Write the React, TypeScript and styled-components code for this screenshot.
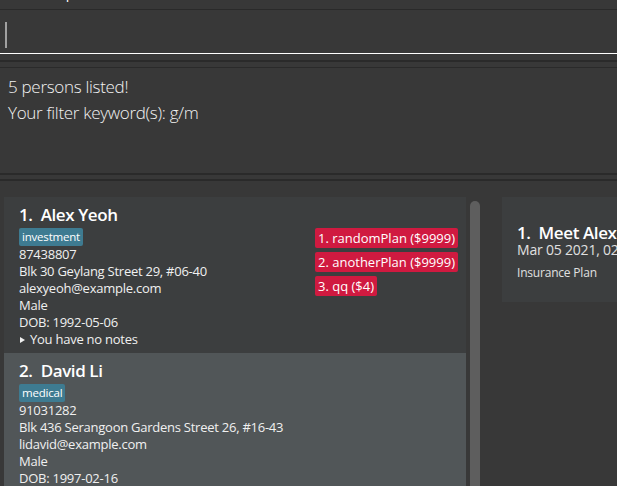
import styled, { createGlobalStyle } from "styled-components";

const GlobalStyle = createGlobalStyle`
  html, body {
    margin: 0;
    padding: 0;
    background: #383838;
    overflow: hidden;
  }
  body {
    font-family: "Open Sans", "Noto Sans", sans-serif;
    color: #ffffff;
  }
`;

type Person = {
  name: string;
  tag: string;
  phone: string;
  address: string;
  email: string;
  gender: string;
  dob: string;
  plans: string[];
  notes: string;
};

const persons: Person[] = [
  {
    name: "Alex Yeoh",
    tag: "investment",
    phone: "87438807",
    address: "Blk 30 Geylang Street 29, #06-40",
    email: "alexyeoh@example.com",
    gender: "Male",
    dob: "1992-05-06",
    plans: ["randomPlan ($9999)", "anotherPlan ($9999)", "qq ($4)"],
    notes: "You have no notes",
  },
  {
    name: "David Li",
    tag: "medical",
    phone: "91031282",
    address: "Blk 436 Serangoon Gardens Street 26, #16-43",
    email: "lidavid@example.com",
    gender: "Male",
    dob: "1997-02-16",
    plans: [],
    notes: "You have no notes",
  },
];

export default function App() {
  return (
    <>
      <GlobalStyle />
      <Root>
        <MenuBar>
          <MenuItem>File</MenuItem>
          <MenuItem>Help</MenuItem>
        </MenuBar>

        <CommandBox>
          <Caret />
        </CommandBox>

        <Divider $top={6} />
        <ResultDisplay>
          <ResultLine>5 persons listed!</ResultLine>
          <ResultLine>Your filter keyword(s): g/m</ResultLine>
        </ResultDisplay>
        <Divider $top={0} />
        <Divider $top={4} />

        <ListArea>
          <PersonList>
            {persons.map((p, i) => (
              <PersonCard key={p.name} $odd={i % 2 === 1}>
                <CardTitle>
                  {i + 1}.&nbsp;&nbsp;{p.name}
                </CardTitle>
                <CardBody>
                  <Details>
                    <Tags>
                      <Tag>{p.tag}</Tag>
                    </Tags>
                    <Field>{p.phone}</Field>
                    <Field>{p.address}</Field>
                    <Field>{p.email}</Field>
                    <Field>{p.gender}</Field>
                    <Field>DOB: {p.dob}</Field>
                    <Notes>
                      <Arrow />
                      {p.notes}
                    </Notes>
                  </Details>
                  <Plans>
                    {p.plans.map((plan, j) => (
                      <Plan key={plan}>
                        {j + 1}. {plan}
                      </Plan>
                    ))}
                  </Plans>
                </CardBody>
              </PersonCard>
            ))}
          </PersonList>
          <ScrollBar>
            <Thumb />
          </ScrollBar>

          <AppointmentList>
            <AppointmentCard>
              <AppTitle>1.&nbsp;&nbsp;Meet Alex Yeoh</AppTitle>
              <AppDate>Mar 05 2021, 02:00 PM</AppDate>
              <AppType>Insurance Plan</AppType>
            </AppointmentCard>
          </AppointmentList>
        </ListArea>
      </Root>
    </>
  );
}

const Root = styled.div`
  width: 617px;
  height: 486px;
  display: flex;
  flex-direction: column;
  background: #383838;
  overflow: hidden;
`;

const MenuBar = styled.div`
  height: 9px;
  flex-shrink: 0;
  display: flex;
  gap: 12px;
  padding-left: 10px;
  overflow: hidden;
  border-bottom: 1px solid #2a2a2a;
`;

const MenuItem = styled.span`
  font-size: 14px;
  line-height: 14px;
  margin-top: -14px;
  color: #ffffff;
`;

const CommandBox = styled.div`
  height: 43px;
  flex-shrink: 0;
  display: flex;
  align-items: center;
  padding-left: 5px;
  border-bottom: 1px solid #ffffff;
`;

const Caret = styled.span`
  display: block;
  width: 2px;
  height: 26px;
  margin-top: 6px;
  background: #a0a0a0;
`;

const Divider = styled.div<{ $top: number }>`
  flex-shrink: 0;
  margin-top: ${(p) => p.$top}px;
  height: 2px;
  background: #2a2a2a;
`;

const ResultDisplay = styled.div`
  height: 106px;
  flex-shrink: 0;
  margin-top: 5px;
  border-top: 1px solid #2a2a2a;
  padding: 6px 8px 0;
  box-sizing: border-box;
`;

const ResultLine = styled.div`
  font-size: 17px;
  font-weight: 300;
  line-height: 26px;
  letter-spacing: -0.3px;
  color: #f2f2f2;
`;

const ListArea = styled.div`
  flex: 1;
  display: flex;
  padding-top: 16px;
  min-height: 0;
`;

const PersonList = styled.div`
  width: 462px;
  flex-shrink: 0;
  margin-left: 4px;
  display: flex;
  flex-direction: column;
`;

const PersonCard = styled.div<{ $odd: boolean }>`
  background: ${(p) => (p.$odd ? "#515658" : "#3c3e3f")};
  padding: 7px 6px 5px 15px;
`;

const CardTitle = styled.div`
  font-size: 17px;
  font-weight: 600;
  line-height: 22px;
  letter-spacing: -0.4px;
  color: #ffffff;
`;

const CardBody = styled.div`
  display: flex;
  justify-content: space-between;
  margin-top: 2px;
`;

const Details = styled.div`
  display: flex;
  flex-direction: column;
`;

const Tags = styled.div`
  display: flex;
  gap: 4px;
`;

const Tag = styled.span`
  background: #3e7b91;
  color: #ffffff;
  font-size: 11.5px;
  line-height: 18px;
  letter-spacing: -0.2px;
  padding: 0 3px;
  border-radius: 2px;
`;

const Field = styled.div`
  font-size: 13px;
  line-height: 17px;
  letter-spacing: -0.25px;
  color: #f0f0f0;
`;

const Notes = styled(Field)`
  display: flex;
  align-items: center;
`;

const Arrow = styled.span`
  width: 0;
  height: 0;
  margin: 0 5px 0 1px;
  border-top: 3px solid transparent;
  border-bottom: 3px solid transparent;
  border-left: 5px solid #f0f0f0;
`;

const Plans = styled.div`
  width: 145px;
  display: flex;
  flex-direction: column;
  align-items: flex-start;
  gap: 4px;
`;

const Plan = styled.span`
  background: #d01a40;
  color: #ffffff;
  font-size: 13px;
  line-height: 20px;
  padding: 0 3px;
  border-radius: 2px;
`;

const ScrollBar = styled.div`
  width: 10px;
  flex-shrink: 0;
  margin-left: 4px;
  padding-top: 4px;
`;

const Thumb = styled.div`
  height: 400px;
  background: #5e5e5e;
  border-radius: 5px;
`;

const AppointmentList = styled.div`
  flex: 1;
  margin-left: 22px;
  min-width: 0;
`;

const AppointmentCard = styled.div`
  height: 105px;
  box-sizing: border-box;
  background: #3c3e3f;
  padding: 27px 0 0 15px;
  white-space: nowrap;
  overflow: hidden;
`;

const AppTitle = styled.div`
  font-size: 17px;
  font-weight: 600;
  line-height: 18px;
  letter-spacing: -0.4px;
  color: #ffffff;
`;

const AppDate = styled.div`
  font-size: 14px;
  line-height: 16px;
  letter-spacing: -0.2px;
  color: #e0e0e0;
`;

const AppType = styled.div`
  margin-top: 7px;
  font-size: 12px;
  line-height: 16px;
  letter-spacing: -0.2px;
  color: #e0e0e0;
`;
